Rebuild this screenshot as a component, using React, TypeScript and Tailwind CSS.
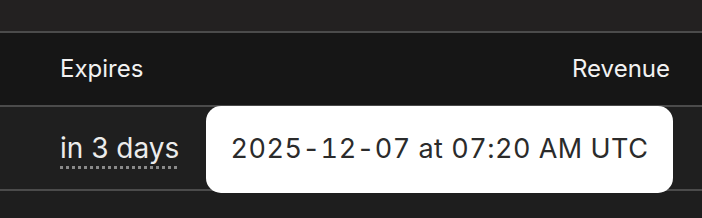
export default function App() {
  return (
    <div
      className="relative h-[218px] w-[702px] overflow-hidden bg-[#1e1e1e]"
      style={{ fontFamily: 'Inter, "Noto Sans", sans-serif' }}
    >
      {/* previous row edge */}
      <div className="h-[33px] bg-[#232121] border-b-2 border-[#4b4b4b]" />

      {/* header */}
      <div className="flex h-[72px] items-center justify-between bg-[#161616] pl-[60px] pr-[32px] text-[24px] text-[#f2f2f2]">
        <span>Expires</span>
        <span>Revenue</span>
      </div>

      {/* row */}
      <div className="flex h-[86px] items-center border-y-2 border-[#4b4b4b] bg-[#1f1f1f] pl-[60px]">
        <span className="text-[28px] leading-none text-[#ececec] underline decoration-dotted decoration-[#8a8a8a] decoration-[3px] underline-offset-[8px]">
          in 3 days
        </span>
      </div>

      {/* tooltip */}
      <div className="absolute left-[206px] top-[106px] flex h-[87px] w-[467px] items-center justify-center rounded-[15px] bg-white">
        <span className="text-[27px] tracking-[0.5px] text-[#2b2b2b] tabular-nums">
          2025-12-07 at 07:20 AM UTC
        </span>
      </div>
    </div>
  )
}
